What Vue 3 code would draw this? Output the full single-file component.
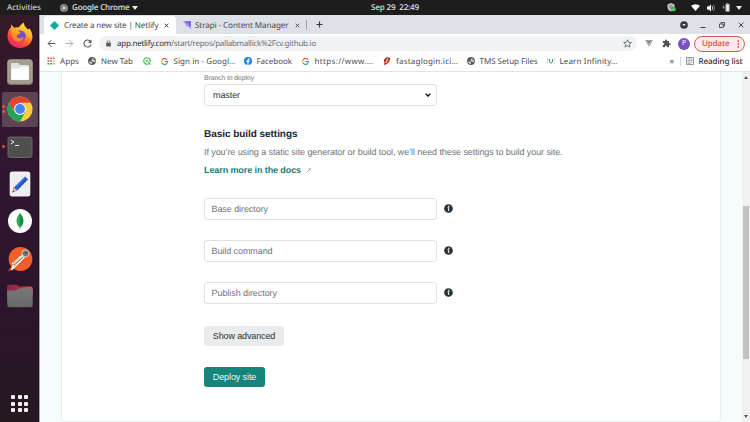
<script setup>
// Spreads a label over a given width by adjusting its letter spacing.
const vFit = {
  mounted(el, { value }) {
    const natural = el.getBoundingClientRect().width
    el.style.letterSpacing = (value - natural) / el.textContent.length + 'px'
  },
}

const bookmarks = [
  { icon: 'apps', text: 'Apps', width: 19, size: 8, slot: 41 },
  { icon: 'globe', text: 'New Tab', width: 32, slot: 54.5 },
  { icon: 'q', text: '', width: 0, slot: 18 },
  { icon: 'google', text: 'Sign in - Googl…', width: 62, slot: 83 },
  { icon: 'facebook', text: 'Facebook', width: 35.5, slot: 58 },
  { icon: 'google', text: 'https://www.…', width: 59, slot: 81.5 },
  { icon: 'bank', text: 'fastaglogin.ici…', width: 62, slot: 83.5 },
  { icon: 'globe', text: 'TMS Setup Files', width: 58, slot: 80 },
  { icon: 'learn', text: 'Learn Infinity…', width: 58, slot: 80 },
]

const fields = [
  { text: 'Base directory', width: 56.5 },
  { text: 'Build command', width: 61 },
  { text: 'Publish directory', width: 65.5 },
]

const dock = ['firefox', 'files', 'chrome', 'terminal', 'notes', 'mongo', 'postman', 'folder']
</script>

<template>
  <div class="desktop">
    <header class="topbar">
      <span class="activities"><span v-fit="34">Activities</span></span>
      <svg class="chrome-mini" viewBox="0 0 16 16"><circle cx="8" cy="8" r="8" fill="#8d8d8d" /><path d="M8 4H15M4.6 10L1 4M11.4 10L8 16" stroke="#555" stroke-width="1.4" /><circle cx="8" cy="8" r="3.4" fill="#ddd" stroke="#666" /></svg>
      <span class="app-name"><span v-fit="57.5">Google Chrome</span></span>
      <svg class="caret" viewBox="0 0 6 4"><path d="M0 0H6L3 4Z" fill="#eee" /></svg>
      <span class="clock"><span v-fit="48">Sep 29&nbsp; 22:49</span></span>
      <div class="tray">
        <svg class="shield" viewBox="0 0 18 18"><path d="M8 0L15 3V8Q14 14 8 17Q1 14 1 8V3Z" fill="#c9c9c9" /><path d="M4 5L8 3L12 5V9L8 14L4 9Z" fill="#999" /><circle cx="13" cy="12.5" r="4.6" fill="#34b64a" /><path d="M10.7 12.5L12.5 14.3L15.5 11" fill="none" stroke="#dfd" stroke-width="1.2" /></svg>
        <svg class="wifi" viewBox="0 0 18 14"><path d="M0 3.5Q9-3 18 3.5L9 14Z" fill="#fff" /></svg>
        <svg class="volume" viewBox="0 0 18 16"><path d="M0 5H3L8 1V15L3 11H0Z" fill="#fff" /><path d="M10 4Q13 8 10 12" fill="none" stroke="#ddd" stroke-width="1.8" /><path d="M13 1.5Q18 8 13 14.5" fill="none" stroke="#888" stroke-width="1.7" /></svg>
        <svg class="battery" viewBox="0 0 16 18"><path d="M3 4L0 9H2L1 13L5 8H3Z" fill="#aaa" /><path d="M8 2V0H12V2H14.5V17.5H5.8V2Z" fill="#aaa" /><path d="M8 4H12.3V15.5H8Z" fill="#f5f5f5" /></svg>
        <svg class="caret" viewBox="0 0 6 4"><path d="M0 0H6L3 4Z" fill="#eee" /></svg>
      </div>
    </header>

    <div class="below">
      <aside class="dock">
        <div v-for="name in dock" :key="name" class="dock-item" :class="{ active: name === 'chrome' }">
          <i v-if="name === 'terminal' || name === 'chrome'" class="dot" />
          <i v-if="name === 'chrome'" class="dot" />
          <svg class="dock-icon" viewBox="0 0 26 26">
            <defs>
              <linearGradient id="flame" x1=".8" y1="0" x2=".25" y2="1"><stop offset="0" stop-color="#fff13a" /><stop offset=".35" stop-color="#ffb52d" /><stop offset=".65" stop-color="#ff542d" /><stop offset="1" stop-color="#ec1676" /></linearGradient>
              <linearGradient id="folderTab"><stop offset="0" stop-color="#8b2551" /><stop offset=".5" stop-color="#a52b46" /><stop offset="1" stop-color="#ee6230" /></linearGradient>
              <linearGradient id="folderBody" x2="0" y2="1"><stop offset="0" stop-color="#777" /><stop offset="1" stop-color="#686868" /></linearGradient>
            </defs>
            <template v-if="name === 'firefox'">
              <path d="M13 26C5.500 26 .5 20.500 .5 14C.5 9.500 2.500 6.500 4 5.200L4.200 2.500L7.200 5.700Q9.500 4.900 11.500 5.600Q13.600 2.900 16.500 .5Q17 4.300 20.500 7Q22 7.700 22.400 6.300Q25.500 10.500 25.500 14.500C25.500 21 20 26 13 26Z" fill="url(#flame)" />
              <path d="M8.500 10.500Q12 7 16.500 9.500Q20.500 13 17.600 17.300Q14 21 9.400 18.500Q6.300 15.500 8.500 10.500Z" fill="#7350ce" />
              <path d="M4 11Q6 7 9.500 9L13.700 10.500Q12.200 13 9.800 13.200Q9.300 16 13 16.500L17 15Q15.200 19.500 11 19.400Q5.800 18.800 4 11Z" fill="#ff8b27" />
              <path d="M4 5.800Q6 8.800 10 8.800L13.800 10.500L9 12Q4.500 10.500 4 5.800Z" fill="#ffb026" />
            </template>
            <template v-else-if="name === 'files'">
              <rect x=".7" y=".7" width="24.600" height="24.600" rx="2.500" fill="#a39d8e" stroke="#bdb8ac" stroke-width=".7" />
              <path d="M1 23.500Q1 25.300 3 25.300H23Q25 25.300 25 23.500" fill="none" stroke="#777164" />
              <path d="M4 5Q4 4 5 4H11Q12 4 12.500 6H21Q22 6 22 7V20Q22 21 21 21H5Q4 21 4 20Z" fill="#e5e3dd" /><path d="M4.300 9.500H12L13.500 8H21.700V20Q21.700 20.700 21 20.700H5Q4.300 20.700 4.300 20Z" fill="#fff" />
            </template>
            <template v-else-if="name === 'chrome'">
              <circle cx="13" cy="13" r="12.500" fill="#ffcd42" />
              <path d="M2.100 6.800A12.500 12.500 0 0 1 23.900 6.800H13L7.600 16.200Z" fill="#e34435" /><path d="M2.100 6.800A12.500 12.500 0 0 0 13 25.500L18.500 16L7.600 16Z" fill="#23a455" /><circle cx="13" cy="13" r="6" fill="#f2f5f7" /><circle cx="13" cy="13" r="4.900" fill="#4387ee" />
            </template>
            <template v-else-if="name === 'terminal'">
              <rect x="1" y="3" width="24" height="20.500" rx="2" fill="#505050" stroke="#727272" stroke-width=".8" /><path d="M4 6L7 8L4 10M8 11.500H12" fill="none" stroke="#eee" stroke-width="1" />
            </template>
            <template v-else-if="name === 'notes'">
              <rect x="2.700" y=".5" width="20.600" height="25" rx="2.500" fill="#f0f0f0" /><path d="M5 5H21M5 8H21M5 11H21M5 14H21M5 17H21" stroke="#dedede" stroke-width=".5" /><path d="M18 5.500L21 8.500L10.500 19.300L5.700 21.200L6.800 16.500Z" fill="#2857cf" /><path d="M7 16.500L10.300 19.200L5.200 21.600Z" fill="#e4b477" /><path d="M5.200 21.600L6 19.500L7.500 20.500Z" fill="#444" /><path d="M17.300 7L8.500 16.200" stroke="#648af2" />
            </template>
            <template v-else-if="name === 'mongo'">
              <circle cx="13" cy="13" r="12" fill="#fff" /><path d="M13 5C8.500 10 8.200 15.500 13 20Z" fill="#2dac58" /><path d="M13 5C17.500 10 17.800 15.500 13 20Z" fill="#138c47" /><path d="M13 18V22" stroke="#aaa" stroke-width=".7" />
            </template>
            <template v-else-if="name === 'postman'">
              <path d="M1 25.500L4.500 20L6.500 23Z" fill="#e85427" /><circle cx="13.500" cy="13" r="11.900" fill="#f25d2b" /><circle cx="18.400" cy="7.400" r="3.600" fill="#777" stroke="#ddd" stroke-width=".8" /><circle cx="19" cy="6.800" r="1.300" fill="#555" /><path d="M16 9L6 20L4.500 24M17.500 11L8 20.500L4.500 24M14 10L5 18" fill="none" stroke="#f4f2ec" stroke-width="1.500" /><path d="M15 12L7 19" stroke="#696969" stroke-width=".9" /><path d="M12 12L6 17" stroke="#edb448" />
            </template>
            <template v-else>
              <path d="M0 4Q0 1.800 2 1.800H10Q11.500 3.500 13 3.500H23.500Q25.700 3.500 25.700 5.500V12H0Z" fill="url(#folderTab)" /><path d="M0 7.600H9Q11 5.300 13 5.300H24Q25.700 5.300 25.700 7V22Q25.700 24.300 23.500 24.300H2.500Q.3 24.300 .3 22Z" fill="url(#folderBody)" />
            </template>
          </svg>
        </div>
        <div class="launcher"><i v-for="n in 9" :key="n" /></div>
      </aside>

      <main class="browser">
        <div class="tabs">
          <div class="tab current">
            <svg class="netlify" viewBox="0 0 16 16"><path d="M8 0L16 8L8 16L0 8Z" fill="#0eada0" /><path d="M4 4L12 12M12 4L4 12M1 9L15 7" stroke="#07a093" stroke-width=".5" /></svg>
            <span class="tab-title"><span v-fit="94.500">Create a new site | Netlify</span></span>
            <svg class="close" viewBox="0 0 8 8"><path d="M1 1L7 7M7 1L1 7" stroke="#303338" stroke-width="1.500" /></svg>
          </div>
          <div class="tab">
            <svg class="strapi" viewBox="0 0 16 16"><path d="M0 0H15Q16 0 16 1V16L10.500 10.500V6.500Q10.500 5.500 9.500 5.500H5.500Z" fill="#8063ef" /><path d="M0 0H5.500V5.500ZM10.500 10.500H16V16Z" fill="#a996f3" /><path d="M5.500 5.500H10.500V10.500H6Q5.500 10.500 5.500 10Z" fill="#a996f3" /></svg>
            <span class="tab-title"><span v-fit="93.500">Strapi - Content Manager</span></span>
            <svg class="close" viewBox="0 0 8 8"><path d="M1 1L7 7M7 1L1 7" stroke="#404348" stroke-width="1.400" /></svg>
          </div>
          <i class="tab-rule" />
          <svg class="plus" viewBox="0 0 8 8"><path d="M4 .5V7.500M.5 4H7.500" stroke="#35383c" stroke-width="1.300" /></svg>
          <div class="window-buttons">
            <svg viewBox="0 0 16 16"><circle cx="8" cy="8" r="7.700" fill="#363a3e" /><path d="M4.500 6H11.500L8 10Z" fill="#fff" /></svg>
            <svg viewBox="0 0 16 16"><path d="M3 13H13" stroke="#33363a" stroke-width="2" /></svg>
            <svg viewBox="0 0 16 16"><path d="M3 6H10.500V13H3ZM6 6V3H13V10H10.500" fill="none" stroke="#33363a" stroke-width="1.600" /></svg>
            <svg viewBox="0 0 16 16"><path d="M3.500 3.500L12.500 12.500M12.500 3.500L3.500 12.500" stroke="#33363a" stroke-width="1.800" /></svg>
          </div>
        </div>

        <div class="toolbar">
          <svg class="nav" viewBox="0 0 16 16"><path d="M15 8H2M8 2L2 8L8 14" fill="none" stroke="#4f5256" stroke-width="1.700" /></svg>
          <svg class="nav" viewBox="0 0 16 16"><path d="M1 8H14M8 2L14 8L8 14" fill="none" stroke="#a1a4a8" stroke-width="1.600" /></svg>
          <svg class="nav" viewBox="0 0 16 16"><path d="M13.300 4.500A6.300 6.300 0 1 0 14.200 9.500" fill="none" stroke="#4f5256" stroke-width="1.800" /><path d="M15 1V7H9Z" fill="#4f5256" /></svg>
          <div class="omnibox">
            <svg class="lock" viewBox="0 0 10 13"><path d="M2.200 6V3.500Q2.200 1 5 1Q7.800 1 7.800 3.500V6" fill="none" stroke="#55595e" stroke-width="1.400" /><rect x=".5" y="5" width="9" height="7.500" rx="1" fill="#55595e" /></svg>
            <span class="host"><span v-fit="54">app.netlify.com</span></span><span class="path"><span v-fit="145">/start/repos/pallabmallick%2Fcv.github.io</span></span>
            <svg class="star" viewBox="0 0 18 18"><path d="M9 1.500L11.200 6.500L16.700 7.100L12.600 10.700L13.800 16.200L9 13.300L4.200 16.200L5.400 10.700L1.300 7.100L6.800 6.500Z" fill="none" stroke="#55595e" stroke-width="1.600" /></svg>
          </div>
          <svg class="vue" viewBox="0 0 16 14"><path d="M0 0H3.500L8 8L12.500 0H16L8 14Z" fill="#aaa" /><path d="M3.500 0H6.500L8 2.700L9.500 0H12.500L8 8Z" fill="#777" /></svg>
          <svg class="puzzle" viewBox="0 0 24 24"><path d="M20.500 11H19V7a2 2 0 0 0-2-2h-4V3.500a2.500 2.500 0 0 0-5 0V5H4a2 2 0 0 0-2 2v3.800h1.500a2.700 2.700 0 0 1 0 5.400H2V20a2 2 0 0 0 2 2h3.800v-1.500a2.700 2.700 0 0 1 5.400 0V22H17a2 2 0 0 0 2-2v-4h1.500a2.500 2.500 0 0 0 0-5Z" fill="#505458" /></svg>
          <span class="avatar">P</span>
          <span class="update"><span v-fit="27.500">Update</span><svg viewBox="0 0 4 16"><circle cx="2" cy="2" r="1.700" /><circle cx="2" cy="8" r="1.700" /><circle cx="2" cy="14" r="1.700" /></svg></span>
        </div>

        <div class="bookmarks">
          <div v-for="(b, i) in bookmarks" :key="i" class="bookmark" :style="{ width: b.slot + 'px' }">
            <svg v-if="b.icon === 'apps'" viewBox="0 0 16 16"><path d="M1 2.500H4.500M1 8H4.500" stroke="#e04236" stroke-width="3.200" /><path d="M6.300 2.500H9.800M11.700 2.500H15" stroke="#dc5548" stroke-width="3.200" /><path d="M1 13.500H4.500M6.300 13.500H9.800" stroke="#23a455" stroke-width="3.200" /><path d="M6.300 8H9.800" stroke="#4387ee" stroke-width="3.200" /><path d="M11.700 8H15M11.700 13.500H15" stroke="#f4b920" stroke-width="3.200" /></svg>
            <svg v-else-if="b.icon === 'globe'" viewBox="0 0 16 16"><circle cx="8" cy="8" r="7.800" fill="#565a5e" /><path d="M2 9L7 10L8 14Q3 14 2 9ZM7 2H11Q10 4 8.500 4.500V7H5.500L7.500 9H11L12.500 11Q14 9 14 6L11 7L10.500 5L12 3.500Z" fill="#e6e7e9" /></svg>
            <svg v-else-if="b.icon === 'q'" viewBox="0 0 16 16"><path d="M10.500 14A6.500 6.500 0 1 1 14 10.500M10.500 10.500L14.800 15" fill="none" stroke="#36b64b" stroke-width="2.200" /><path d="M5.300 8.500L8 6L10.700 8.500M8 6V11" fill="none" stroke="#36b64b" stroke-width="1.600" /></svg>
            <svg v-else-if="b.icon === 'google'" class="g" viewBox="0 0 16 16"><path d="M13.500 3.500A7 7 0 0 0 2 5" fill="none" stroke="#e74638" stroke-width="2.700" /><path d="M2 5A7 7 0 0 0 2.200 11.500" fill="none" stroke="#f9bb20" stroke-width="2.700" /><path d="M2.200 11.500A6.800 6.800 0 0 0 12.500 13" fill="none" stroke="#31a653" stroke-width="2.700" /><path d="M8 8H14.500Q14.500 11.500 12.500 13" fill="none" stroke="#4387ee" stroke-width="2.700" /></svg>
            <svg v-else-if="b.icon === 'facebook'" viewBox="0 0 16 16"><circle cx="8" cy="8" r="8" fill="#1681ec" /><path d="M6.700 16V10H4.700V7.500H6.700V6Q6.700 3 9.700 3H11.300V5.300H10Q9 5.300 9 6.300V7.500H11.200L10.800 10H9V16Z" fill="#fff" /></svg>
            <svg v-else-if="b.icon === 'bank'" viewBox="0 0 16 16"><path d="M5 2Q9-1 14 2Q16 6 10 12L4 16L1 14L4 12Q-1 8 5 2Z" fill="#a72426" /><path d="M8 3L11 2L8 10L6 13L4.500 11Z" fill="#f4ca9a" /><path d="M11 5Q15 2 14 7Q12 10 8 11Z" fill="#cb5632" /></svg>
            <svg v-else viewBox="0 0 16 16"><path d="M3 2H1V14H3M13 2H15V14H13" fill="none" stroke="#c0ddd8" stroke-width="1.400" /><path d="M5 4V9Q5 12 8 12Q11 12 11 9V4" fill="none" stroke="#45887b" stroke-width="2" /></svg>
            <span v-if="b.text" v-fit="b.width">{{ b.text }}</span>
          </div>
          <span class="more">»</span><i class="rule" />
          <svg class="list-icon" viewBox="0 0 16 16"><rect x=".8" y=".8" width="14.400" height="14.400" rx="1" fill="none" stroke="#65696d" stroke-width="1.500" /><path d="M8 1V15M3 4H6.500M3 7H6.500M3 10H6.500M3 13H6.500M10 4H13M10 7H13M10 10H13" stroke="#777b80" stroke-width="1.300" /></svg>
          <span class="reading" v-fit="44">Reading list</span>
        </div>

        <div class="viewport">
          <section class="card">
            <label class="label"><span v-fit="50">Branch to deploy</span></label>
            <div class="field select"><span v-fit="27">master</span><svg viewBox="0 0 6 4"><path d="M.7 .7L3 3L5.300 .7" fill="none" stroke="#111b20" stroke-width="1.500" /></svg></div>
            <h2><span v-fit="93.500">Basic build settings</span></h2>
            <p><span v-fit="358.500">If you’re using a static site generator or build tool, we’ll need these settings to build your site.</span></p>
            <a class="docs"><span v-fit="97">Learn more in the docs</span><svg viewBox="0 0 10 10"><path d="M1 9L8.500 1.500M5.500 1.500H8.500V4" fill="none" stroke="#478e87" stroke-width="1.200" /></svg></a>
            <div class="fields">
              <div v-for="f in fields" :key="f.text" class="field-row">
                <div class="field"><span v-fit="f.width">{{ f.text }}</span></div>
                <svg viewBox="0 0 18 18"><circle cx="9" cy="9" r="8.700" fill="#26343a" /><path d="M7.200 7.300H9.800L8.700 13H10.500" fill="none" stroke="#fff" stroke-width="1.900" /><circle cx="9.800" cy="4.500" r="1.400" fill="#fff" /></svg>
              </div>
            </div>
            <button class="advanced"><span v-fit="62.500">Show advanced</span></button>
            <button class="deploy"><span v-fit="43.500">Deploy site</span></button>
          </section>
          <div class="scrollbar">
            <svg viewBox="0 0 6 4"><path d="M1 4L3 1L5 4Z" fill="#50545a" /></svg>
            <i class="thumb" />
            <svg class="down" viewBox="0 0 6 4"><path d="M1 0L3 3L5 0Z" fill="#50545a" /></svg>
          </div>
        </div>
      </main>
    </div>
  </div>
</template>

<style>
body { margin: 0; overflow: hidden; }
</style>

<style scoped>
* { box-sizing: border-box; }
svg { display: block; flex: none; }
span { white-space: nowrap; }
.desktop { width: 750px; height: 422px; display: flex; flex-direction: column; overflow: hidden; font-family: "Noto Sans", "Open Sans", sans-serif; font-size: 8px; color: #494c50; text-rendering: geometricPrecision; }
.topbar { height: 15px; flex: none; background: #1d1d1d; color: #e6e6e6; display: flex; align-items: center; padding-left: 7px; font-size: 8px; }
.activities { width: 53px; }
.chrome-mini { width: 8px; height: 8px; }
.app-name { width: 60px; margin-left: 4px; font-weight: 500; }
.caret { width: 6px; height: 4px; }
.clock { margin-left: 233px; width: 296px; font-weight: 500; }
.tray { display: flex; align-items: center; }
.shield { width: 9px; height: 9px; margin-right: 15px; }
.wifi { width: 9px; height: 7px; margin-right: 7px; }
.volume { width: 9px; height: 8px; margin-right: 6px; }
.battery { width: 9px; height: 9px; margin-right: 5px; }
.below { display: flex; flex: 1; min-height: 0; }
.dock { width: 39px; margin-right: 1px; flex: none; display: flex; flex-direction: column; background: linear-gradient(#351925 0, #321632 32%, #2b152a 73%, #241820); border-right: 1px solid #1e1020; box-shadow: 1px 0 #aaa1ab; }
.dock-item { width: 36px; height: 35.400px; margin: 0 0 2px 2px; flex: none; display: flex; flex-direction: column; align-items: center; justify-content: center; gap: 2px; position: relative; border-radius: 2px; }
.dock-item:first-child { margin-top: 2px; }
.dock-item.active { background: #5c4455; }
.dock-icon { width: 26px; height: 26px; position: absolute; left: 5px; top: 4.500px; }
.dot { width: 3px; height: 3px; border-radius: 50%; background: #ed5527; align-self: flex-start; }
.launcher { margin: auto auto 10px 11px; display: grid; grid-template-columns: repeat(3, 4px); gap: 2.500px; }
.launcher i { width: 4px; height: 4px; border-radius: 1px; background: #f3f1f3; }
.browser { flex: 1; min-width: 0; display: flex; flex-direction: column; background: #fff; }
.tabs { height: 19px; flex: none; background: #dee1e6; display: flex; align-items: center; padding-left: 4px; }
.tab { height: 18px; align-self: flex-end; display: flex; align-items: center; padding-left: 6px; font-size: 8.100px; }
.tab.current { width: 132px; background: #fff; border-radius: 4px 4px 0 0; }
.tab + .tab { width: 129px; padding-left: 7px; }
.netlify { width: 9px; height: 9px; margin-right: 5px; }
.tab-title { width: 100px; }
.strapi { width: 8px; height: 8px; margin-right: 4px; }
.close { width: 5px; height: 5px; }
.tab-rule { width: 1px; height: 10px; background: #9da0a5; margin-left: 1px; }
.plus { width: 7px; height: 7px; margin-left: 9px; }
.window-buttons { margin: 0 5px 0 auto; display: flex; gap: 11px; }
.window-buttons svg { width: 8px; height: 8px; }
.toolbar { height: 19px; flex: none; display: flex; align-items: center; padding: 0 4px 0 7px; }
.nav { width: 9px; height: 9px; margin-right: 9px; }
.nav:nth-child(3) { margin-right: 7px; }
.omnibox { width: 538px; height: 15px; border-radius: 8px; background: #f0f2f4; display: flex; align-items: center; padding: 0 5px 0 7px; }
.lock { width: 5px; height: 7px; margin-right: 6px; }
.host { color: #292c30; width: 54px; }
.path { color: #6b6f74; }
.star { width: 9px; height: 9px; margin-left: auto; }
.vue { width: 8px; height: 7px; margin-left: 8px; }
.puzzle { width: 9px; height: 9px; margin-left: 9px; }
.avatar { width: 12px; height: 12px; margin: 0 4px 0 7px; border-radius: 50%; background: #7950bf; color: #fff; font-size: 7px; line-height: 12px; text-align: center; }
.update { height: 16px; width: 51px; border: 1px solid #d65a50; border-radius: 8px; background: #fcebea; color: #d5453a; display: flex; align-items: center; justify-content: space-between; padding: 0 5px 0 7px; font-weight: 500; font-size: 8px; }
.update svg { width: 2.500px; height: 8px; fill: #d93025; }
.bookmarks { height: 19px; flex: none; border-bottom: 1px solid #e2e3e5; display: flex; align-items: center; padding: 0 0 2px 7px; }
.bookmark { display: flex; align-items: center; gap: 5px; flex: none; }
.bookmark svg { width: 8px; height: 8px; }
.bookmark .g { width: 7px; height: 7px; margin-right: 1px; }
.more { font-size: 9px; margin-left: 43px; width: 10px; line-height: 10px; }
.rule { width: 1px; height: 9px; background: #d4d6d9; margin-right: 5px; }
.list-icon { width: 8px; height: 8px; margin-right: 5px; }
.reading { color: #292c30; font-weight: 500; }
.viewport { flex: 1; min-height: 0; display: flex; background: #f5fdfc; padding-left: 21px; }
.card { width: 660px; height: 350px; border: solid #e6eeee; border-width: 0 1px 1px; border-radius: 0 0 4px 4px; background: #fff; padding: 2px 0 0 142px; font-family: "Liberation Sans", Arial, sans-serif; font-size: 9px; color: #6c757b; display: flex; flex-direction: column; align-items: flex-start; }
.label { font-size: 6.800px; height: 10px; line-height: 9px; }
.field { width: 233px; height: 22px; border: 1px solid #dfe2e3; border-radius: 3px; background: #fff; display: flex; align-items: center; padding-left: 6.500px; }
.select { justify-content: space-between; padding: 0 5px 0 8px; color: #29363b; }
.select svg { width: 6px; height: 4px; }
h2 { margin: 22px 0 0; height: 14px; line-height: 14px; font-size: 10px; color: #192830; }
p { margin: 4px 0 0; height: 12px; line-height: 12px; }
.docs { margin-top: 6px; height: 12px; line-height: 12px; display: flex; align-items: center; gap: 5px; font-weight: bold; color: #187c73; }
.docs svg { width: 5px; height: 5px; }
.fields { margin-top: 22px; display: flex; flex-direction: column; gap: 20px; }
.field-row { display: flex; align-items: center; gap: 6.500px; }
.field-row svg { width: 9px; height: 9px; margin-bottom: 1px; }
button { border: 0; padding: 0; border-radius: 3px; height: 20px; font: inherit; text-align: center; }
.advanced { width: 80px; margin-top: 21.500px; background: #e9ebec; color: #27353b; }
.deploy { width: 61px; margin-top: 21.500px; background: #15847a; color: #eefaf8; }
.scrollbar { width: 8px; margin-left: auto; background: #f1f1f1; display: flex; flex-direction: column; align-items: center; padding: 3px 0; }
.scrollbar svg { width: 6px; height: 4px; }
.thumb { width: 6px; height: 153px; background: #c1c1c1; margin-top: 127px; }
.down { margin-top: auto; }
</style>
